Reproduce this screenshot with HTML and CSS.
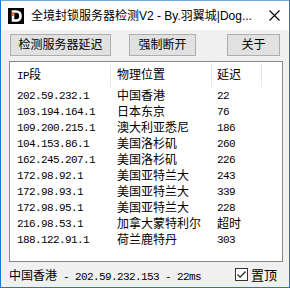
FILE: index.html
```html
<!doctype html>
<html lang="zh-CN">
  <head>
    <meta charset="UTF-8" />
    <meta name="viewport" content="width=device-width, initial-scale=1.0" />
    <title>全境封锁服务器检测V2</title>
    <link rel="stylesheet" href="styles.css">
  </head>
  <body>
    <div class="window">
      <div class="titlebar">
        <svg class="app-icon" width="16" height="16" viewBox="0 0 16 16">
          <rect width="16" height="16" fill="#000" />
          <path d="M5 3.5h3.2c2.6 0 4.3 1.7 4.3 4.5s-1.7 4.5-4.3 4.5H5z" fill="none" stroke="#fff" stroke-width="2.6" />
          <rect x="3.7" y="4" width="2" height="4" fill="#e8641c" />
        </svg>
        <span class="title">全境封锁服务器检测V2 - By.羽翼城|Dog...</span>
        <svg class="close" width="11" height="11" viewBox="0 0 11 11">
          <path d="M0.5 0.5L10.5 10.5M10.5 0.5L0.5 10.5" stroke="#000" stroke-width="1.1" />
        </svg>
      </div>

      <div class="toolbar">
        <button class="btn btn-detect">检测服务器延迟</button>
        <button class="btn btn-break">强制断开</button>
        <button class="btn btn-about">关于</button>
      </div>

      <div class="list">
        <div class="list-head">
          <div class="col col-ip"><span class="mono">IP</span>段</div>
          <div class="col col-loc">物理位置</div>
          <div class="col col-ping">延迟</div>
          <div class="col col-rest"></div>
        </div>
        <div class="row">
          <div class="col col-ip mono">202.59.232.1</div>
          <div class="col col-loc">中国香港</div>
          <div class="col col-ping mono">22</div>
        </div>
        <div class="row">
          <div class="col col-ip mono">103.194.164.1</div>
          <div class="col col-loc">日本东京</div>
          <div class="col col-ping mono">76</div>
        </div>
        <div class="row">
          <div class="col col-ip mono">109.200.215.1</div>
          <div class="col col-loc">澳大利亚悉尼</div>
          <div class="col col-ping mono">186</div>
        </div>
        <div class="row">
          <div class="col col-ip mono">104.153.86.1</div>
          <div class="col col-loc">美国洛杉矶</div>
          <div class="col col-ping mono">260</div>
        </div>
        <div class="row">
          <div class="col col-ip mono">162.245.207.1</div>
          <div class="col col-loc">美国洛杉矶</div>
          <div class="col col-ping mono">226</div>
        </div>
        <div class="row">
          <div class="col col-ip mono">172.98.92.1</div>
          <div class="col col-loc">美国亚特兰大</div>
          <div class="col col-ping mono">243</div>
        </div>
        <div class="row">
          <div class="col col-ip mono">172.98.93.1</div>
          <div class="col col-loc">美国亚特兰大</div>
          <div class="col col-ping mono">339</div>
        </div>
        <div class="row">
          <div class="col col-ip mono">172.98.95.1</div>
          <div class="col col-loc">美国亚特兰大</div>
          <div class="col col-ping mono">228</div>
        </div>
        <div class="row">
          <div class="col col-ip mono">216.98.53.1</div>
          <div class="col col-loc">加拿大蒙特利尔</div>
          <div class="col col-ping">超时</div>
        </div>
        <div class="row">
          <div class="col col-ip mono">188.122.91.1</div>
          <div class="col col-loc">荷兰鹿特丹</div>
          <div class="col col-ping mono">303</div>
        </div>
      </div>

      <div class="statusbar">
        <span class="status">中国香港<span class="mono"> - 202.59.232.153 - 22ms</span></span>
        <label class="pin">
          <span class="checkbox">
            <svg width="11" height="11" viewBox="0 0 11 11">
              <path d="M1.5 5.5L4.2 8.2L9.5 2.5" fill="none" stroke="#222" stroke-width="1.2" />
            </svg>
          </span>
          置顶
        </label>
      </div>
    </div>
  </body>
</html>
```

FILE: styles.css
```css
html {
  height: 100%;
}

body {
  margin: 0;
  font-family: "Liberation Sans", "Noto Sans CJK SC", sans-serif;
  font-size: 12px;
  color: #000;
}

.window {
  box-sizing: border-box;
  width: 290px;
  height: 288px;
  border: 1px solid #1b78d0;
  border-top-color: #6aa8e0;
  background: #f0f0f0;
  display: flex;
  flex-direction: column;
}

.mono {
  font-family: "Liberation Mono", monospace;
  font-size: 11px;
  letter-spacing: -0.6px;
}

/* title bar */
.titlebar {
  height: 29px;
  background: #fff;
  display: flex;
  align-items: center;
  padding: 0 9px 0 7px;
}

.app-icon {
  flex: none;
}

.title {
  flex: 1;
  margin-left: 7px;
  white-space: nowrap;
  overflow: hidden;
  line-height: 16px;
}

.close {
  flex: none;
  margin-top: -1px;
}

/* buttons */
.toolbar {
  display: flex;
  margin: 4px 0 0 9px;
  height: 22px;
}

.btn {
  box-sizing: border-box;
  height: 22px;
  padding: 0;
  border: 1px solid #adadad;
  background: #e1e1e1;
  font: inherit;
  color: #000;
  line-height: 20px;
}

.btn-detect {
  width: 101px;
}

.btn-break {
  width: 67px;
  margin-left: 18px;
}

.btn-about {
  width: 53px;
  margin-left: 31px;
}

/* list view */
.list {
  box-sizing: border-box;
  width: 274px;
  height: 201px;
  margin: 5px 0 0 8px;
  border: 1px solid #828790;
  background: #fff;
}

.list-head,
.row {
  display: flex;
}

.list-head {
  height: 26px;
  line-height: 26px;
}

.list-head .col {
  box-sizing: border-box;
  border-right: 1px solid #e5e5e5;
  margin: 1px 0 0;
  height: 24px;
  line-height: 24px;
}

.list-head .col-rest {
  border-right: 0;
}

.row {
  height: 16px;
  line-height: 16px;
}

.col {
  box-sizing: border-box;
  flex: none;
  white-space: nowrap;
}

.col-ip {
  width: 101px;
  padding-left: 7px;
}

.col-loc {
  width: 101px;
  padding-left: 6px;
}

.col-ping {
  width: 50px;
  padding-left: 5px;
}

/* status bar */
.statusbar {
  flex: 1;
  display: flex;
  align-items: center;
  padding: 0 12px 0 8px;
}

.status {
  flex: 1;
  white-space: nowrap;
}

.pin {
  display: flex;
  align-items: center;
  gap: 3px;
  font-size: 13px;
}

.checkbox {
  box-sizing: border-box;
  width: 13px;
  height: 13px;
  border: 1px solid #333;
  background: #fff;
  display: flex;
  align-items: center;
  justify-content: center;
}
```
